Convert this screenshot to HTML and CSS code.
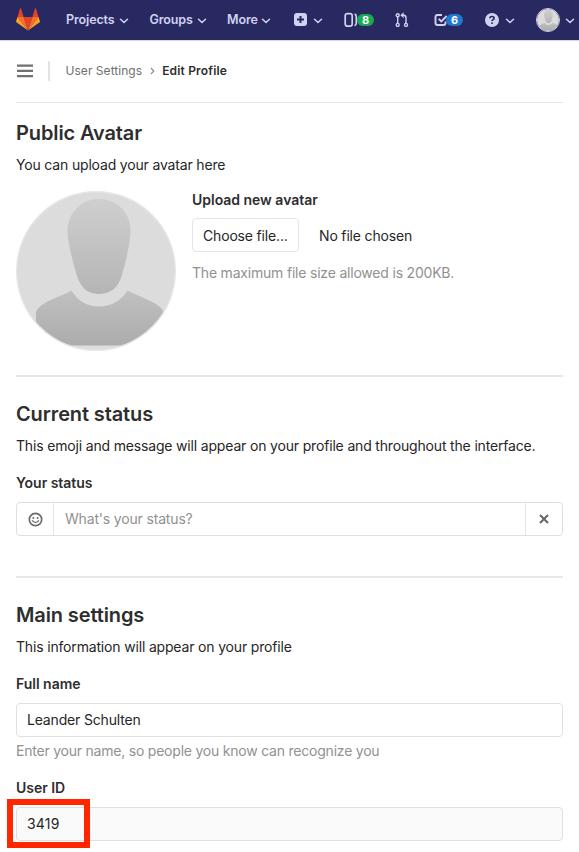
FILE: index.html
```html
<!DOCTYPE html>
<html lang="en">
<head>
<meta charset="utf-8">
<title>Edit Profile</title>
<link rel="stylesheet" href="styles.css">
</head>
<body>
<svg class="defs" width="0" height="0">
  <defs>
    <linearGradient id="person" x1="0" y1="0" x2="0" y2="1"><stop offset="0" stop-color="#cfcfcf"/><stop offset="1" stop-color="#b5b5b5"/></linearGradient>
    <linearGradient id="torso" x1="0" y1="0" x2="0" y2="1"><stop offset="0" stop-color="#c0c0c0"/><stop offset="1" stop-color="#acacac"/></linearGradient>
    <clipPath id="round"><circle cx="80" cy="80" r="79.5"/></clipPath>
    <symbol id="avatar" viewBox="0 0 160 160">
      <g clip-path="url(#round)">
        <rect width="160" height="160" fill="#dcdcdc"/>
        <path fill="url(#person)" d="M83 8C64 8 51 23 51.500 41C52 53 58 76 62 88C66 98 73 103 83 103C93 103 101 98 105 87C109 74 114 54 114.500 41C115 23 102 8 83 8Z"/>
        <path fill="url(#torso)" d="M55.500 99.500C62 110 71 115.500 83 115.500C96 115.500 106 109 111.500 99.500C126 107 142 111 147 120V154.500H20V121C25 110 43 107 55.500 99.500Z"/>
      </g>
      <circle cx="80" cy="80" r="79.300" fill="none" stroke="#e6e6e6" stroke-width="1.400"/>
    </symbol>
    <symbol id="chevron" viewBox="0 0 10 6"><path d="M1.500 1.200 5 4.500 8.500 1.200" fill="none" stroke="currentColor" stroke-width="1.500" stroke-linecap="round" stroke-linejoin="round"/></symbol>
  </defs>
</svg>
<header class="navbar">
  <svg class="logo" viewBox="0 0 24 23">
    <path fill="#e24329" d="M12 22.500 7.600 9h8.800Z"/>
    <path fill="#fc6d26" d="M12 22.500 7.600 9H1.500Z"/>
    <path fill="#fca326" d="M1.500 9 .1 13.100c-.1.400 0 .8.300 1.100L12 22.500Z"/>
    <path fill="#e24329" d="M1.500 9h6.100L5 .6c-.1-.5-.8-.5-1 0Z"/>
    <path fill="#fc6d26" d="M12 22.500 16.400 9h6.100Z"/>
    <path fill="#fca326" d="m22.500 9 1.400 4.100c.1.400 0 .8-.3 1.100L12 22.500Z"/>
    <path fill="#e24329" d="M22.500 9h-6.100L19 .6c.1-.5.8-.5 1 0Z"/>
  </svg>
  <nav class="menu">
    <a class="projects">Projects <svg class="chev"><use href="#chevron"/></svg></a>
    <a class="groups">Groups <svg class="chev"><use href="#chevron"/></svg></a>
    <a class="more">More <svg class="chev"><use href="#chevron"/></svg></a>
  </nav>
  <div class="tools">
    <a class="new"><svg width="13" height="13" viewBox="0 0 13 13"><rect width="13" height="13" rx="3" fill="currentColor"/><path d="M6.500 3v7M3 6.500h7" stroke="#292961" stroke-width="2"/></svg><svg class="chev"><use href="#chevron"/></svg></a>
    <a class="issues"><svg width="16" height="16" viewBox="0 0 16 16" fill="none" stroke="currentColor" stroke-width="1.700"><rect x="1.200" y="1.600" width="7" height="12.600" rx="2.200"/><path d="M10.500 2.200q1.800.4 1.800 2.500v6.500q0 2.100-1.800 2.500"/></svg><span class="badge green">8</span></a>
    <a class="merges"><svg width="14" height="16" viewBox="0 0 14 16" fill="none" stroke="currentColor" stroke-width="1.400"><circle cx="2.700" cy="3.300" r="1.500"/><circle cx="2.700" cy="12.900" r="1.500"/><circle cx="11" cy="12.900" r="1.500"/><path d="M2.700 4.800v6.600M11 11.400V5.800q0-2.600-2.500-2.600H7.300"/><path fill="currentColor" stroke="none" d="M8.600.3v5.800L5.300 3.200Z"/></svg></a>
    <a class="todos"><svg width="14" height="14" viewBox="0 0 14 14" fill="none" stroke="currentColor" stroke-width="1.900"><path d="M8 2H3.500Q1.500 2 1.500 4v6q0 2 2 2h6q2 0 2-2V8.500"/><path d="m4.700 5.900 2.600 2.500L12.700 3"/></svg><span class="badge blue">6</span></a>
    <a class="help"><svg width="14" height="14" viewBox="0 0 14 14"><circle cx="7" cy="7" r="7" fill="currentColor"/><path d="M4.900 5.300q0-1.800 2.100-1.800t2.100 1.700q0 1-1.100 1.500-1 .5-1 1.400" fill="none" stroke="#292961" stroke-width="1.700"/><rect x="6.100" y="9.200" width="1.900" height="1.800" rx=".8" fill="#292961"/></svg><svg class="chev"><use href="#chevron"/></svg></a>
    <a class="user"><svg class="mini"><use href="#avatar"/></svg><svg class="chev"><use href="#chevron"/></svg></a>
  </div>
</header>
<main class="content">
  <div class="breadcrumbs">
    <svg class="burger" width="16" height="14" viewBox="0 0 16 14"><path d="M0 1.600h16M0 6.900h16M0 12.200h16" stroke="#707070" stroke-width="2.200"/></svg>
    <div class="trail"><span class="crumb">User Settings</span><svg width="5" height="8" viewBox="0 0 5 8"><path d="m1 1 2.800 3L1 7" fill="none" stroke="#8a8a8a" stroke-width="1.100"/></svg><b>Edit Profile</b></div>
  </div>
  <section class="avatar-section">
    <h4>Public Avatar</h4>
    <p class="wide-gap">You can upload your avatar here</p>
    <div class="avatar-row">
      <svg class="avatar"><use href="#avatar"/></svg>
      <div class="upload">
        <h5>Upload new avatar</h5>
        <div class="file"><button class="choose">Choose file...</button><span class="nofile">No file chosen</span></div>
        <p class="hint max">The maximum file size allowed is 200KB.</p>
      </div>
    </div>
  </section>
  <section class="status-section">
    <h4>Current status</h4>
    <p class="wide-gap">This emoji and message will appear on your profile and throughout the interface.</p>
    <h5 class="label">Your status</h5>
    <div class="group">
      <span class="emoji"><svg width="15" height="15" viewBox="0 0 15 15"><circle cx="7.500" cy="7.500" r="6.200" fill="none" stroke="#6a6a6a" stroke-width="1.700"/><circle cx="5.400" cy="6" r="1" fill="#6a6a6a"/><circle cx="9.600" cy="6" r="1" fill="#6a6a6a"/><path d="M4.400 8.600q3.100 3.700 6.200 0" fill="none" stroke="#6a6a6a" stroke-width="1.200" stroke-linecap="round"/></svg></span>
      <span class="prompt">What's your status?</span>
      <span class="clear"><svg width="10" height="10" viewBox="0 0 10 10"><path d="m1 1 8 8m0-8L1 9" stroke="#666" stroke-width="2"/></svg></span>
    </div>
  </section>
  <section class="main-section">
    <h4>Main settings</h4>
    <p class="wide-gap">This information will appear on your profile</p>
    <h5 class="label">Full name</h5>
    <div class="field">Leander Schulten</div>
    <p class="hint name-hint">Enter your name, so people you know can recognize you</p>
    <h5 class="label">User ID</h5>
    <div class="field readonly">3419<i class="marker"></i></div>
  </section>
</main>
</body>
</html>
```
FILE: styles.css
```css
* { box-sizing: border-box; }
body { margin: 0; width: 579px; height: 852px; overflow: hidden; background: #fff; color: #262626; font: 14px/20px Inter, "Liberation Sans", sans-serif; letter-spacing: -0.17px; }
.defs { position: absolute; }
svg { display: block; flex: none; }
h4, h5, p { margin: 0; white-space: nowrap; }
h4 { font-size: 20px; line-height: 26px; font-weight: 600; letter-spacing: -0.12px; color: #2e2e2e; }
h5 { font-size: 14px; line-height: 20px; font-weight: 600; letter-spacing: -0.02px; color: #2e2e2e; }
p { line-height: 20px; }
.wide-gap { margin-top: 9px; }
.label { margin-top: 17px; }

.navbar { height: 41px; padding: 0 0 1px 16px; display: flex; align-items: center; background: #292961; border-bottom: 1px solid #d8d8e4; color: #d1d1f0; letter-spacing: 0; }
.logo { width: 24px; height: 23px; margin-top: -1px; }
.menu, .tools, .navbar a { display: flex; align-items: center; }
.menu { margin-left: 26px; font-size: 12.500px; font-weight: 600; letter-spacing: -0.12px; }
.menu a { justify-content: space-between; }
.projects { width: 63px; }
.groups { width: 57px; margin-left: 20.500px; }
.more { width: 44px; margin-left: 20.500px; }
.chev { width: 10px; height: 6px; margin-top: 3px; }
.tools { margin-left: 23px; }
.new { width: 29px; justify-content: space-between; }
.issues { margin-left: 21px; width: 31px; }
.merges { margin-left: 20px; width: 14px; }
.todos { margin-left: 25px; width: 30px; }
.help { margin-left: 21px; width: 30px; justify-content: space-between; }
.user { margin-left: 21px; width: 39px; justify-content: space-between; }
.mini { width: 24px; height: 24px; border: 1px solid #d1d1f0; border-radius: 50%; }
.badge { flex: none; width: 17px; height: 12px; margin-left: -3px; border-radius: 6px; color: #fff; font-size: 11px; font-weight: 700; line-height: 12px; text-align: center; }
.green { background: #1aaa55; }
.blue { background: #1f78d1; }
.todos .badge { margin-left: -2px; }

.content { padding: 0 16px; }
.breadcrumbs { height: 62px; padding-bottom: 1px; display: flex; align-items: center; border-bottom: 1px solid #e3e3e3; }
.burger { margin-left: 1px; }
.trail { height: 20px; margin-left: 15px; padding-left: 15.500px; border-left: 2px solid #e3e3e3; display: flex; align-items: center; font-size: 12px; color: #707070; letter-spacing: 0.04px; }
.trail svg { margin: 0 7.500px; }
.trail b { font-weight: 600; color: #2e2e2e; letter-spacing: 0.18px; }

.avatar-section { height: 274px; padding-top: 17px; border-bottom: 2px solid #e7e7e7; }
.avatar-row { display: flex; margin-top: 16px; }
.avatar { width: 160px; height: 160px; }
.upload { margin: -1px 0 0 16px; }
.file { display: flex; align-items: center; margin-top: 8px; }
.choose { width: 107px; height: 34px; padding: 2px 0 0 10px; border: 1px solid #e5e5e5; border-radius: 4px; background: #fff; color: inherit; font: inherit; letter-spacing: inherit; text-align: left; white-space: nowrap; }
.nofile { margin-left: 20px; padding-top: 2px; }
.hint { color: #919191; letter-spacing: -0.2px; }
.max { margin-top: 11px; }

.status-section { height: 201px; padding-top: 24px; border-bottom: 2px solid #e7e7e7; }
.group { height: 34px; margin-top: 9px; display: flex; border: 1px solid #dfdfdf; border-radius: 4px; }
.emoji, .prompt, .clear { display: flex; align-items: center; }
.emoji { width: 37px; padding-left: 11px; border-right: 1px solid #e5e5e5; }
.prompt { flex: 1; padding-left: 11px; color: #919191; }
.clear { width: 37px; padding-left: 13px; border-left: 1px solid #e5e5e5; }

.main-section { padding-top: 24px; }
.field { height: 34px; margin-top: 9px; padding: 0 10px; display: flex; align-items: center; border: 1px solid #dfdfdf; border-radius: 4px; position: relative; }
.name-hint { margin-top: 4px; letter-spacing: -0.22px; }
.readonly { background: #fafafa; letter-spacing: 0.2px; }
.marker { position: absolute; left: -10px; top: -9px; width: 83px; height: 49px; border: 6px solid #ff2600; }
```
